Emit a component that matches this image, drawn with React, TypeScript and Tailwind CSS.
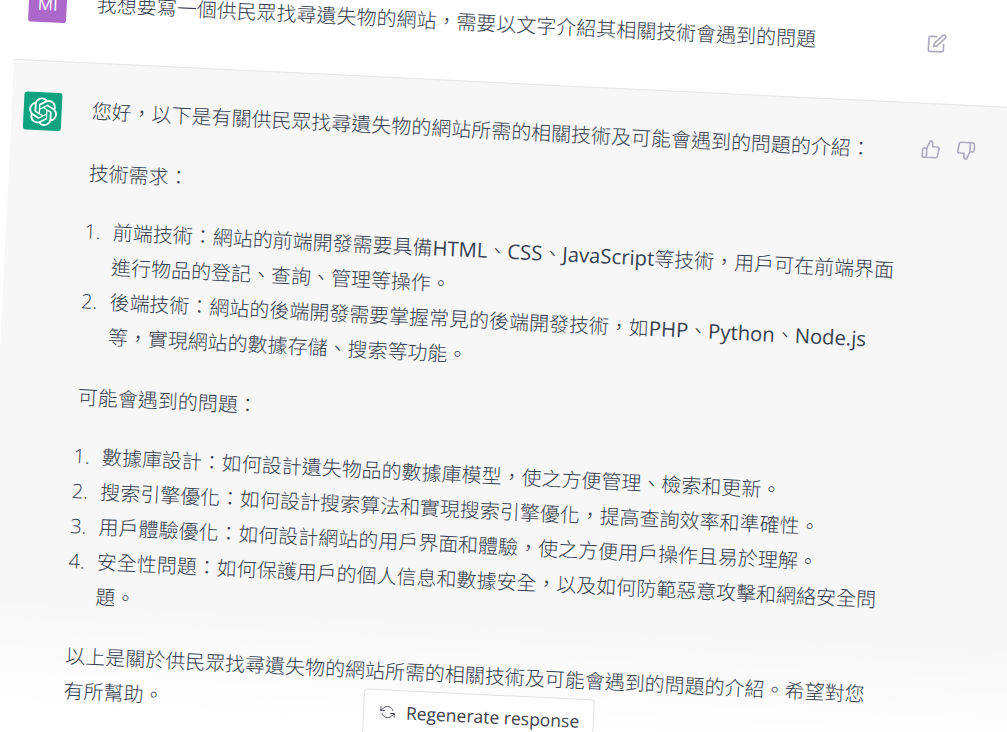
import type { ReactNode } from "react";

const OPENAI_PATH =
  "M37.5324 16.8707C37.9808 15.5241 38.1363 14.0974 37.9886 12.6859C37.8409 11.2744 37.3934 9.91076 36.676 8.68622C35.6126 6.83404 33.9882 5.3676 32.0373 4.4985C30.0864 3.62941 27.9098 3.40259 25.8215 3.85078C24.8796 2.7893 23.7219 1.94125 22.4257 1.36341C21.1295 0.785575 19.7249 0.491269 18.3058 0.500197C16.1708 0.495044 14.0893 1.16803 12.3614 2.42214C10.6335 3.67624 9.34853 5.44666 8.6917 7.47815C7.30085 7.76286 5.98686 8.3414 4.8377 9.17505C3.68854 10.0087 2.73073 11.0782 2.02839 12.312C0.956464 14.1591 0.498905 16.2988 0.721698 18.4228C0.944492 20.5467 1.83612 22.5449 3.268 24.1293C2.81966 25.4759 2.66413 26.9026 2.81182 28.3141C2.95951 29.7256 3.40701 31.0892 4.12437 32.3138C5.18791 34.1659 6.8123 35.6322 8.76321 36.5013C10.7141 37.3704 12.8907 37.5973 14.9789 37.1492C15.9208 38.2107 17.0786 39.0587 18.3747 39.6366C19.6709 40.2144 21.0755 40.5087 22.4946 40.4998C24.6307 40.5054 26.7133 39.8321 28.4418 38.5772C30.1704 37.3223 31.4556 35.5506 32.1119 33.5179C33.5027 33.2332 34.8167 32.6547 35.9659 31.821C37.115 30.9874 38.0728 29.9178 38.7752 28.684C39.8458 26.8371 40.3023 24.6979 40.0789 22.5748C39.8556 20.4517 38.9639 18.4544 37.5324 16.8707ZM22.4978 37.8849C20.7443 37.8874 19.0459 37.2733 17.6994 36.1501C17.7601 36.117 17.8666 36.0586 17.936 36.0161L25.9004 31.4156C26.1003 31.3019 26.2663 31.137 26.3813 30.9378C26.4964 30.7386 26.5563 30.5124 26.5549 30.2825V19.0542L29.9213 20.998C29.9389 21.0068 29.9541 21.0198 29.9656 21.0359C29.977 21.052 29.9842 21.0707 29.9867 21.0902V30.3889C29.9842 32.375 29.1946 34.2791 27.7909 35.6841C26.3872 37.0892 24.4838 37.8806 22.4978 37.8849ZM6.39227 31.0064C5.51397 29.4888 5.19742 27.7107 5.49804 25.9832C5.55718 26.0187 5.66048 26.0818 5.73461 26.1244L13.699 30.7248C13.8975 30.8408 14.1233 30.902 14.3532 30.902C14.583 30.902 14.8088 30.8408 15.0073 30.7248L24.731 25.1103V28.9979C24.7321 29.0177 24.7283 29.0376 24.7199 29.0556C24.7115 29.0736 24.6988 29.0893 24.6829 29.1012L16.6317 33.7497C14.9096 34.7416 12.8643 35.0097 10.9447 34.4954C9.02506 33.9811 7.38785 32.7263 6.39227 31.0064ZM4.29707 13.6194C5.17156 12.0998 6.55279 10.9364 8.19885 10.3327C8.19885 10.4013 8.19491 10.5228 8.19491 10.6071V19.808C8.19351 20.0378 8.25334 20.2638 8.36823 20.4629C8.48312 20.6619 8.64893 20.8267 8.84863 20.9404L18.5723 26.5542L15.206 28.4979C15.1894 28.5089 15.1703 28.5155 15.1505 28.5173C15.1307 28.5191 15.1107 28.516 15.0924 28.5082L7.04046 23.8557C5.32135 22.8601 4.06716 21.2235 3.55289 19.3046C3.03862 17.3858 3.30624 15.3413 4.29707 13.6194ZM31.955 20.0556L22.2312 14.4411L25.5976 12.4981C25.6142 12.4872 25.6333 12.4805 25.6531 12.4787C25.6729 12.4769 25.6928 12.4801 25.7111 12.4879L33.7631 17.1364C34.9967 17.849 36.0017 18.8982 36.6606 20.1613C37.3194 21.4244 37.6047 22.849 37.4832 24.2684C37.3617 25.6878 36.8382 27.0432 35.9743 28.1759C35.1103 29.3086 33.9415 30.1717 32.6047 30.6641C32.6047 30.5947 32.6047 30.4733 32.6047 30.3889V21.188C32.6066 20.9586 32.5474 20.7328 32.4332 20.5338C32.319 20.3348 32.154 20.1698 31.955 20.0556ZM35.3055 15.0128C35.2464 14.9765 35.1431 14.9142 35.069 14.8717L27.1045 10.2712C26.906 10.1554 26.6803 10.0943 26.4504 10.0943C26.2206 10.0943 25.9948 10.1554 25.7963 10.2712L16.0726 15.8858V11.9982C16.0715 11.9783 16.0753 11.9585 16.0837 11.9405C16.0921 11.9225 16.1048 11.9068 16.1207 11.8949L24.1719 7.25025C25.4053 6.53903 26.8158 6.19376 28.2383 6.25482C29.6608 6.31589 31.0364 6.78077 32.2044 7.59508C33.3723 8.40939 34.2842 9.53945 34.8334 10.8531C35.3826 12.1667 35.5464 13.6095 35.3055 15.0128ZM14.2424 21.9419L10.8752 19.9981C10.8576 19.9893 10.8423 19.9763 10.8309 19.9602C10.8195 19.9441 10.8122 19.9254 10.8098 19.9058V10.6071C10.8107 9.18295 11.2173 7.78848 11.9819 6.58696C12.7466 5.38544 13.8377 4.42659 15.1275 3.82264C16.4173 3.21869 17.8524 2.99464 19.2649 3.1767C20.6775 3.35876 22.0089 3.93941 23.1034 4.85067C23.0427 4.88379 22.937 4.94215 22.8668 4.98473L14.9024 9.58517C14.7025 9.69878 14.5366 9.86356 14.4215 10.0626C14.3065 10.2616 14.2466 10.4877 14.2479 10.7175L14.2424 21.9419ZM16.071 17.9991L20.4018 15.4978L24.7325 17.9975V22.9985L20.4018 25.4983L16.071 22.9985V17.9991Z";

function EditIcon() {
  return (
    <svg viewBox="0 0 24 24" fill="none" stroke="currentColor" strokeWidth={2} strokeLinecap="round" strokeLinejoin="round" className="w-5 h-5">
      <path d="M11 4H4a2 2 0 0 0-2 2v14a2 2 0 0 0 2 2h14a2 2 0 0 0 2-2v-7" />
      <path d="M18.5 2.5a2.121 2.121 0 0 1 3 3L12 15l-4 1 1-4 9.5-9.5z" />
    </svg>
  );
}

function ThumbUp() {
  return (
    <svg viewBox="0 0 24 24" fill="none" stroke="currentColor" strokeWidth={2} strokeLinecap="round" strokeLinejoin="round" className="w-5 h-5">
      <path d="M14 9V5a3 3 0 0 0-3-3l-4 9v11h11.28a2 2 0 0 0 2-1.7l1.38-9a2 2 0 0 0-2-2.3zM7 22H4a2 2 0 0 1-2-2v-7a2 2 0 0 1 2-2h3" />
    </svg>
  );
}

function ThumbDown() {
  return (
    <svg viewBox="0 0 24 24" fill="none" stroke="currentColor" strokeWidth={2} strokeLinecap="round" strokeLinejoin="round" className="w-5 h-5">
      <path d="M10 15v4a3 3 0 0 0 3 3l4-9V2H5.72a2 2 0 0 0-2 1.7l-1.38 9a2 2 0 0 0 2 2.3zm7-13h2.67A2.31 2.31 0 0 1 22 4v7a2.31 2.31 0 0 1-2.33 2H17" />
    </svg>
  );
}

function RegenIcon() {
  return (
    <svg viewBox="0 0 24 24" fill="none" stroke="currentColor" strokeWidth={1.5} strokeLinecap="round" strokeLinejoin="round" className="w-[15px] h-[15px]">
      <polyline points="1 4 1 10 7 10" />
      <polyline points="23 20 23 14 17 14" />
      <path d="M20.49 9A9 9 0 0 0 5.64 5.64L1 10m22 4l-4.64 4.36A9 9 0 0 1 3.51 15" />
    </svg>
  );
}

// latin runs sit a touch larger than the CJK around them
function En({ children }: { children: ReactNode }) {
  return <span className="text-[20.3px] font-normal">{children}</span>;
}

export default function App() {
  return (
    <div className="relative w-[1007px] h-[732px] overflow-hidden bg-white">
      {/* whole page photographed at a slight tilt */}
      <div
        className="w-[1200px] -mt-[50px] origin-[0_50px] rotate-[2.77deg] text-[20px] leading-[35px] font-light text-[#374151]"
        style={{ fontFamily: '"Open Sans", "Noto Sans CJK TC", sans-serif' }}
      >
        <div className="flex h-[108px] pt-[32px] pl-[29px]">
          <div className="w-[38px] h-[38px] shrink-0 rounded-[3px] bg-[#ab68ca] text-white text-[17px] font-normal flex items-center justify-center">
            MI
          </div>
          <p className="w-[816px] ml-[30px]">
            我想要寫一個供民眾找尋遺失物的網站，需要以文字介紹其相關技術會遇到的問題
          </p>
          <div className="ml-[15px] pt-[6px] text-[#acacbe]">
            <EditIcon />
          </div>
        </div>

        <div className="relative ml-[17px] h-[647px] pt-[30px] pl-[12px] flex bg-[#f7f7f8] border-t border-[#e5e5e8]">
          {/* fade sits under the text, button goes on top further down */}
          <div className="absolute left-0 right-0 bottom-0 h-[110px] bg-gradient-to-b from-transparent to-white" />

          <div className="relative w-[38px] h-[38px] shrink-0 mt-[1px] rounded-[3px] bg-[#10a37f] text-white flex items-center justify-center">
            <svg viewBox="0 0 41 41" fill="currentColor" className="w-[29px] h-[29px]">
              <path d={OPENAI_PATH} />
            </svg>
          </div>

          <div className="relative w-[816px] ml-[30px]">
            <p>您好，以下是有關供民眾找尋遺失物的網站所需的相關技術及可能會遇到的問題的介紹：</p>
            <p className="mt-[27px]">技術需求：</p>
            <ol className="mt-[23px] pl-[20px] list-decimal">
              <li className="pl-[7px]">
                前端技術：網站的前端開發需要具備<En>HTML</En>、<En>CSS</En>、<En>JavaScript</En>等技術，用戶可在前端界面進行物品的登記、查詢、管理等操作。
              </li>
              <li className="pl-[7px]">
                後端技術：網站的後端開發需要掌握常見的後端開發技術，如<En>PHP</En>、<En>Python</En>、<En>Node.js</En>等，實現網站的數據存儲、搜索等功能。
              </li>
            </ol>
            <p className="mt-[26px]">可能會遇到的問題：</p>
            <ol className="mt-[24px] pl-[20px] list-decimal">
              <li className="pl-[7px]">數據庫設計：如何設計遺失物品的數據庫模型，使之方便管理、檢索和更新。</li>
              <li className="pl-[7px]">搜索引擎優化：如何設計搜索算法和實現搜索引擎優化，提高查詢效率和準確性。</li>
              <li className="pl-[7px]">用戶體驗優化：如何設計網站的用戶界面和體驗，使之方便用戶操作且易於理解。</li>
              <li className="pl-[7px]">安全性問題：如何保護用戶的個人信息和數據安全，以及如何防範惡意攻擊和網絡安全問題。</li>
            </ol>
            <p className="mt-[25px]">以上是關於供民眾找尋遺失物的網站所需的相關技術及可能會遇到的問題的介紹。希望對您有所幫助。</p>
          </div>

          <div className="relative ml-[14px] pt-[5px] flex gap-[15px] h-fit text-[#acacbe]">
            <ThumbUp />
            <ThumbDown />
          </div>

          <button className="absolute left-[380px] bottom-[-15px] w-[231px] h-[50px] flex items-start pt-[7px] pl-[16px] gap-[11px] bg-white border border-[#e1e2e6] rounded-[4px] text-[17.5px] leading-[28px] font-normal text-[#40414f]">
            <span className="pt-[7px]">
              <RegenIcon />
            </span>
            Regenerate response
          </button>
        </div>
      </div>
    </div>
  );
}
